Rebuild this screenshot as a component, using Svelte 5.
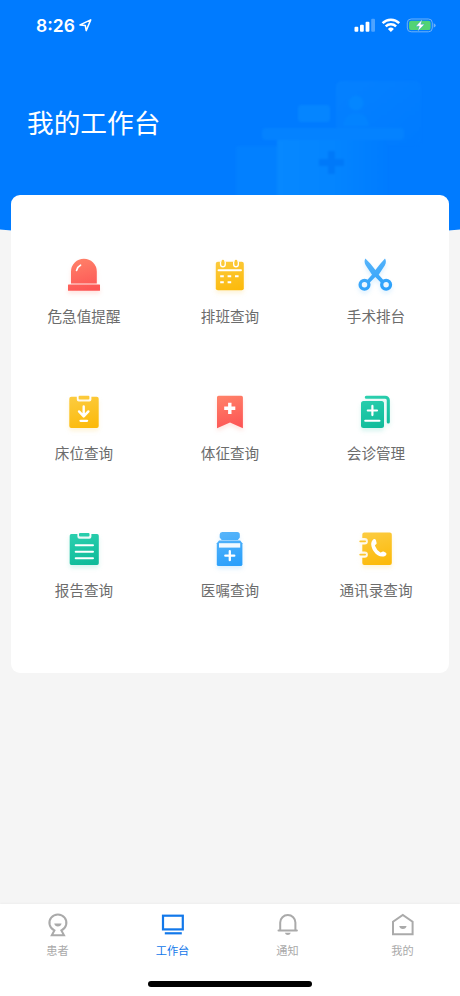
<script>
  let active = 'work';

  const entries = [
    { icon: 'alarm', text: '危急值提醒', tone: 'red' },
    { icon: 'calendar', text: '排班查询', tone: 'yellow' },
    { icon: 'scissors', text: '手术排台', tone: 'blue' },
    { icon: 'bed', text: '床位查询', tone: 'yellow' },
    { icon: 'sign', text: '体征查询', tone: 'red' },
    { icon: 'consult', text: '会诊管理', tone: 'green' },
    { icon: 'report', text: '报告查询', tone: 'green' },
    { icon: 'order', text: '医嘱查询', tone: 'blue' },
    { icon: 'contacts', text: '通讯录查询', tone: 'yellow' },
  ];

  const tabs = [
    { id: 'patient', text: '患者' },
    { id: 'work', text: '工作台' },
    { id: 'notice', text: '通知' },
    { id: 'mine', text: '我的' },
  ];

  const tones = {
    red: ['#ff8068', '#fd5555'],
    yellow: ['#fccb3e', '#fcba0b'],
    blue: ['#56b4fa', '#2ba0fb'],
    green: ['#2bcfae', '#0fbb9a'],
  };
</script>

<div class="app">
  <header class="header">
    <svg class="header_art" viewBox="0 0 460 250">
      <path d="M0 0H460V229.5Q230 252 0 229.5Z" fill="#007bff" />
      <defs>
        <linearGradient id="screen" x1="0" y1="0" x2="1" y2="1">
          <stop offset="0" stop-color="#0581ff" />
          <stop offset="1" stop-color="#007bff" />
        </linearGradient>
        <linearGradient id="desk" x1="0" y1="0" x2="1" y2="0">
          <stop offset="0" stop-color="#0788ff" />
          <stop offset="0.5" stop-color="#0485ff" />
          <stop offset="1" stop-color="#007cff" />
        </linearGradient>
      </defs>
      <g class="header_shapes">
        <rect x="336" y="81" width="85" height="64" rx="6" fill="url(#screen)" />
        <circle cx="356" cy="103" r="7.5" fill="#0486ff" />
        <path d="M343 126q2-13 13-13t13 13z" fill="#0383ff" />
        <rect x="298" y="105" width="32" height="17" rx="3" fill="#0585ff" />
        <rect x="236" y="146" width="44" height="60" rx="2" fill="#0280ff" />
        <rect x="277" y="139" width="110" height="70" fill="url(#desk)" />
        <rect x="262" y="128" width="142" height="12" rx="4" fill="#0482ff" />
        <path d="M328 151h7v8h9v7h-9v8h-7v-8h-9v-7h9z" fill="#0079f9" />
      </g>
    </svg>
    <div class="status">
      <div class="clock">
        <span>8:26</span>
        <svg width="13" height="13" viewBox="0 0 13 13">
          <path
            d="M1 5.9L11.7 0.9 7.2 11.6 6.3 6.5Z"
            fill="none"
            stroke="#fff"
            stroke-width="1.5"
            stroke-linejoin="round"
          />
        </svg>
      </div>
      <div class="signals">
        <svg width="82" height="16" viewBox="0 0 82 16">
          <g fill="#fff">
            <rect x="0.5" y="9.8" width="3.8" height="4.9" rx="1" />
            <rect x="6" y="7.7" width="3.8" height="7" rx="1" />
            <rect x="11.6" y="4.7" width="3.8" height="10" rx="1" />
            <rect x="17.2" y="1.7" width="3.8" height="13" rx="1" opacity="0.3" />
          </g>
          <g fill="none" stroke="#fff" stroke-width="2.5">
            <path d="M28.6 6.1a11.7 11.7 0 0 1 16.6 0" />
            <path d="M31.7 9.4a7.4 7.4 0 0 1 10.4 0" />
          </g>
          <path d="M33.9 12a4.4 4.4 0 0 1 6 0L36.9 15z" fill="#fff" />
          <rect
            x="53.3"
            y="2"
            width="25"
            height="12.8"
            rx="3.8"
            fill="none"
            stroke="#6fb2f8"
          />
          <rect x="55" y="3.7" width="21.6" height="9.4" rx="2.2" fill="#52d374" />
          <path d="M79.7 6.2q2 .7 2 2.2t-2 2.2z" fill="#6fb2f8" />
          <path
            d="M68.2 2.5L61.8 9.2h3.5L63.8 14.3l6.7-7h-3.7z"
            fill="#fff"
            stroke="#1e92d2"
            stroke-width="0.4"
          />
        </svg>
      </div>
    </div>
    <h1 class="title">我的工作台</h1>
  </header>

  <main class="card">
    {#each entries as entry}
      <button class="entry">
        <svg
          class="entry_icon {entry.tone}"
          viewBox="0 0 48 48"
          fill="url(#g-{entry.icon})"
        >
          <defs>
            <linearGradient
              id="g-{entry.icon}"
              gradientUnits="userSpaceOnUse"
              x1="18"
              y1="8"
              x2="27"
              y2="40"
            >
              <stop offset="0" stop-color={tones[entry.tone][0]} />
              <stop offset="1" stop-color={tones[entry.tone][1]} />
            </linearGradient>
          </defs>
          {#if entry.icon === 'alarm'}
            <path d="M11 32.6V20.6a12.9 12.9 0 0 1 25.8 0v12z" />
            <rect x="8" y="33.6" width="32" height="6.2" rx="0.5" />
            <path class="line" d="M16.6 19.4q.8-3.6 3.9-5.2" stroke-width="1.7" />
          {:else if entry.icon === 'calendar'}
            <rect x="9.8" y="10.7" width="28" height="28.5" rx="2" />
            <path
              d="M14.6 10.4v3a2.3 2.3 0 0 0 4.6 0v-3M27.7 10.4v3a2.3 2.3 0 0 0 4.6 0v-3"
              fill="none"
              stroke="#fff"
              stroke-width="1.4"
            />
            <rect x="15.6" y="8.7" width="2.6" height="5.4" rx="1.3" />
            <rect x="28.7" y="8.7" width="2.6" height="5.4" rx="1.3" />
            <path class="line" d="M12.5 19.3H35" stroke-width="1.9" />
            <path
              d="M14.2 24.2h3.6v2h-3.6zM21.6 24.2h3.6v2h-3.6zM29 24.2h3.6v2H29zM14.2 30.3h3.6v2h-3.6zM21.6 30.3h3.6v2h-3.6z"
              fill="#fff"
            />
          {:else if entry.icon === 'scissors'}
            <path
              d="M13.4 7.6Q19 13 23.4 18.9 28 13 33 7.6q1.8 3.2-.1 6.6l-6.2 9.5 5.4 6-2.6 2.5-6.2-6.2-6.2 6.2-2.5-2.5 5.4-6-6.3-9.5q-2.1-3.4-.3-6.6z"
            />
            <g fill="none" stroke="url(#g-scissors)" stroke-width="3.3">
              <circle cx="12.5" cy="33.7" r="4.4" />
              <circle cx="34.1" cy="33.7" r="4.4" />
            </g>
          {:else if entry.icon === 'bed'}
            <path
              d="M11.3 8.7h5.5v2.8a2 2 0 0 0 2 2h10.6a2 2 0 0 0 2-2V8.7h5.3a2 2 0 0 1 2 2V38a2 2 0 0 1-2 2H11.3a2 2 0 0 1-2-2V10.7a2 2 0 0 1 2-2z"
            />
            <rect x="18.6" y="7.8" width="10.8" height="3.6" rx="1" />
            <path class="line" d="M23.7 18.5v9M19 23.4l4.7 5 4.7-5" stroke-width="2.4" />
            <path class="line" d="M20.5 32.8h6.6" stroke-width="2.3" />
          {:else if entry.icon === 'sign'}
            <path
              d="M12.6 7.7h22.7a1.6 1.6 0 0 1 1.6 1.6v31L24 34.4 11 40.3v-31a1.6 1.6 0 0 1 1.6-1.6z"
            />
            <path d="M23.8 14.8v11.1M18.2 20.3h11.1" stroke="#fff" stroke-width="3.4" />
          {:else if entry.icon === 'consult'}
            <path
              d="M14.3 9.2h19a3 3 0 0 1 3 3v21.7"
              fill="none"
              stroke="url(#g-consult)"
              stroke-width="3.1"
              stroke-linecap="round"
            />
            <rect x="9" y="13" width="23" height="27" rx="2.5" />
            <path class="line" d="M20.4 17.9v9.2M15.8 22.5H25" stroke-width="2.2" />
            <path class="line" d="M13.2 32.7h14.3" stroke-width="2" />
          {:else if entry.icon === 'report'}
            <path
              d="M11.4 9h6v2.7a2 2 0 0 0 2 2h10a2 2 0 0 0 2-2V9h5.7a1.7 1.7 0 0 1 1.7 1.7v27.5a1.7 1.7 0 0 1-1.7 1.7H11.4a1.7 1.7 0 0 1-1.7-1.7V10.7A1.7 1.7 0 0 1 11.4 9z"
            />
            <rect x="19" y="8" width="10.5" height="3.4" rx="1" />
            <path
              class="line"
              d="M15.7 20.3H33M15.7 26.8H33M15.7 33.2H33"
              stroke-width="2"
            />
          {:else if entry.icon === 'order'}
            <path
              d="M16.2 7h15a2.6 2.6 0 0 1 2.6 2.6v2.9l-2 2.6H15.7l-2-2.6V9.6A2.6 2.6 0 0 1 16.2 7z"
            />
            <path
              d="M13 15.6h21.2l2.2 2.7v20.9a1.9 1.9 0 0 1-1.9 1.9H12.7a1.9 1.9 0 0 1-1.9-1.9V18.3z"
            />
            <rect x="13" y="18.2" width="21.2" height="4.4" fill="#f1f9ff" />
            <path class="line" d="M23.8 26.2v9M19.3 30.7h9" stroke-width="2.3" />
          {:else}
            <path
              d="M12.3 7.5h25.5a2 2 0 0 1 2 2V38a2 2 0 0 1-2 2H12.3a2 2 0 0 1-2-2v-5.2h2.4a3.2 3.2 0 0 0 0-6.4h-2.4v-6.9h2.4a3.2 3.2 0 0 0 0-6.4h-2.4V9.5a2 2 0 0 1 2-2z"
            />
            <path
              d="M8.2 16.3h4.9M8.2 29.6h4.9"
              stroke="#fcc62f"
              stroke-width="1.8"
              stroke-linecap="round"
            />
            <path
              d="M21.5 14.2c1.5-.8 2.3.1 2.6 1.5l.5 2.2c.3 1.7-2.1 1.5-1.5 3.2q1.5 4.1 5 6.2c1.5.8 1.8-1.4 3.4-.7l2 1c1.4.8 1.3 2.1 0 3.1-3.5 2.2-8.6.3-11.6-4.2-2.8-4.3-4.1-9.6-.4-12.3z"
              fill="#fff"
            />
          {/if}
        </svg>
        <span class="entry_text">{entry.text}</span>
      </button>
    {/each}
  </main>

  <nav class="tabbar">
    <div class="tabs">
      {#each tabs as tab}
        <button
          class="tab"
          class:tab-active={active === tab.id}
          on:click={() => (active = tab.id)}
        >
          <svg class="tab_icon" viewBox="0 0 24 24">
            {#if tab.id === 'patient'}
              <path
                d="M8.4 17.4A8.5 8.3 0 1 1 15.4 17.4L18 22.2H5.8z"
                stroke-width="2"
              />
              <path class="solid" d="M8.2 10.5h7.4q-.7 3-3.7 3t-3.7-3z" />
            {:else if tab.id === 'work'}
              <rect x="2" y="2.7" width="19.8" height="13.7" stroke-width="2.2" />
              <path d="M3.8 20.3h17" stroke-width="2.2" />
            {:else if tab.id === 'notice'}
              <path
                d="M2.5 17.6h18.4M4.2 17.3V9.5a7.6 7.5 0 0 1 15.2 0v7.8"
                stroke-width="2"
                stroke-linecap="round"
              />
              <path class="solid" d="M8.8 19.7h6q-.8 2.4-3 2.4t-3-2.4z" />
            {:else}
              <path d="M2 21.3V8.8L11.8 1.9 21.6 8.8v12.5z" stroke-width="2" />
              <path class="solid" d="M8.2 13.1h7.4q-.7 3-3.7 3t-3.7-3z" />
            {/if}
          </svg>
          <span>{tab.text}</span>
        </button>
      {/each}
    </div>
    <div class="home-bar"></div>
  </nav>
</div>

<style>
  :global(body) {
    background: #f5f5f5;
  }
  .app {
    display: flex;
    flex-direction: column;
    height: 996px;
    overflow: hidden;
    background: #f5f5f5;
    font-family: 'Noto Sans CJK SC', sans-serif;
  }
  button {
    display: flex;
    flex-direction: column;
    align-items: center;
    padding: 0;
    border: none;
    background: none;
    font-family: inherit;
    cursor: pointer;
  }
  .header {
    position: relative;
    height: 250px;
    flex: none;
    color: #fff;
  }
  .header_art {
    position: absolute;
    top: 0;
    left: 0;
    width: 100%;
    height: 250px;
  }
  .header_shapes {
    filter: blur(1px);
  }
  .status {
    position: relative;
    display: flex;
    justify-content: space-between;
    height: 50px;
    padding: 0 24px 0 36px;
  }
  .clock {
    display: flex;
    align-items: center;
    gap: 4px;
    font: 600 17.5px Inter, sans-serif;
  }
  .signals {
    display: flex;
    align-items: center;
  }
  .title {
    position: relative;
    margin: 52px 0 0 27px;
    font-size: 26.7px;
    line-height: 40px;
    font-weight: 400;
  }
  .card {
    position: relative;
    display: grid;
    grid-template-columns: repeat(3, 1fr);
    grid-auto-rows: 137px;
    flex: none;
    box-sizing: border-box;
    height: 478px;
    margin: -54.6px 11px 0;
    padding-top: 55.6px;
    border-radius: 9px;
    background: #fff;
  }
  .entry_icon {
    width: 48px;
    height: 48px;
  }
  .red {
    filter: drop-shadow(0 3px 2px rgba(255, 100, 80, 0.17));
  }
  .yellow {
    filter: drop-shadow(0 3px 2px rgba(252, 190, 30, 0.17));
  }
  .blue {
    filter: drop-shadow(0 3px 2px rgba(50, 165, 250, 0.17));
  }
  .green {
    filter: drop-shadow(0 3px 2px rgba(20, 190, 160, 0.17));
  }
  .line {
    fill: none;
    stroke: #fff;
    stroke-linecap: round;
    stroke-linejoin: round;
  }
  .entry_text {
    margin-top: 6px;
    color: #6c6c6c;
    font-size: 14.6px;
    line-height: 22px;
  }
  .tabbar {
    flex: none;
    height: 92px;
    margin-top: auto;
    background: #fff;
    box-shadow: 0 -1px 2px rgba(0, 0, 0, 0.03);
  }
  .tabs {
    display: flex;
    height: 77px;
  }
  .tab {
    flex: 1;
    padding-top: 9px;
    color: #aaa;
    font-size: 11.2px;
    line-height: 16px;
  }
  .tab-active {
    color: #1278ea;
  }
  .tab_icon {
    width: 24px;
    height: 24px;
    margin-bottom: 5px;
    fill: none;
    stroke: currentColor;
  }
  .solid {
    fill: currentColor;
    stroke: none;
  }
  .home-bar {
    width: 164px;
    height: 6px;
    margin: 0 auto;
    border-radius: 3px;
    background: #000;
  }
</style>
